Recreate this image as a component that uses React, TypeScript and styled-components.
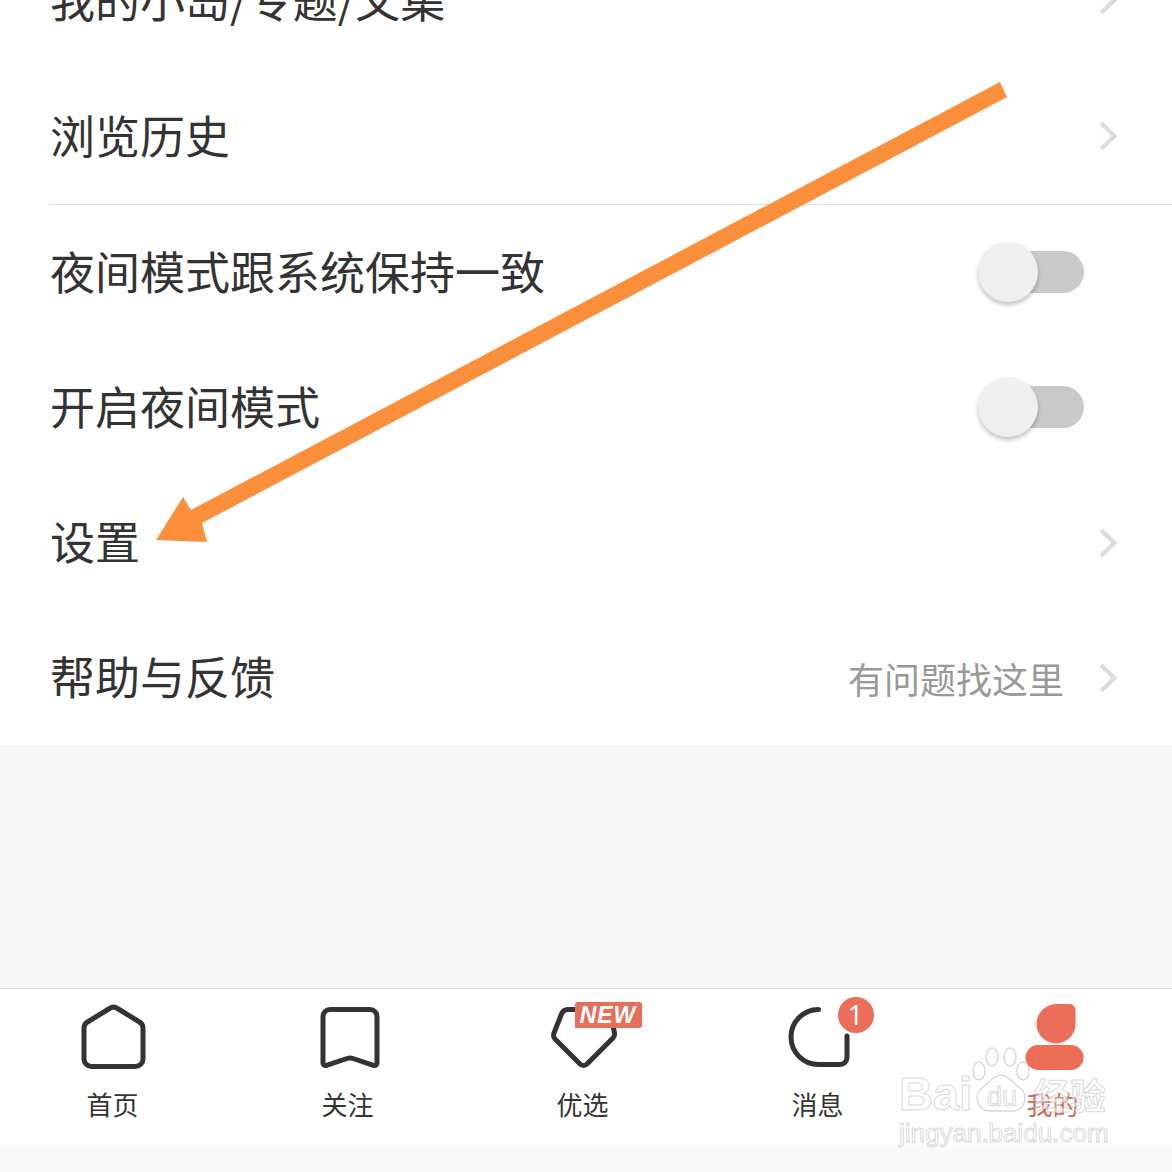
import React from 'react';
import styled, { createGlobalStyle } from 'styled-components';

const GlobalStyle = createGlobalStyle`
  html, body {
    margin: 0;
    padding: 0;
    background: #f6f6f6;
  }
  body {
    font-family: 'Noto Sans CJK SC', 'Noto Sans', sans-serif;
  }
`;

const Page = styled.div`
  position: relative;
  display: flex;
  flex-direction: column;
  width: 1172px;
  height: 1172px;
  overflow: hidden;
  background: #f6f6f6;
`;

const MenuList = styled.div`
  flex: none;
  margin-top: -68px;
  background: #fff;
`;

const Row = styled.div<{ $tall?: boolean; $divider?: boolean }>`
  display: flex;
  align-items: center;
  box-sizing: border-box;
  height: ${(p) => (p.$divider ? 137 : p.$tall ? 136 : 135)}px;
  margin-left: 50px;
  padding-right: 55px;
  border-bottom: ${(p) => (p.$divider ? '1px solid #dedede' : 'none')};
`;

const RowTitle = styled.span`
  flex: 1;
  margin-bottom: 3px;
  color: #333;
  font-size: 45px;
  line-height: 60px;
  white-space: nowrap;
`;

const RowHint = styled.span`
  margin-right: 35px;
  color: #999;
  font-size: 36px;
  line-height: 50px;
`;

const Track = styled.div`
  position: relative;
  width: 84px;
  height: 42px;
  margin: 0 33px 2px 0;
  border-radius: 0 21px 21px 0;
  background: #c9c9c9;
`;

const Thumb = styled.div`
  position: absolute;
  top: -9px;
  left: -22px;
  width: 60px;
  height: 60px;
  border-radius: 50%;
  background: #efefef;
  box-shadow: 0 3px 4px rgba(0, 0, 0, 0.24);
`;

const Filler = styled.div`
  flex: 1;
`;

const TabBar = styled.nav`
  flex: none;
  display: grid;
  grid-template-columns: repeat(5, 235px);
  box-sizing: border-box;
  height: 184px;
  margin-left: -5px;
  border-top: 1px solid #dcdcdc;
  background: linear-gradient(#fff 0, #fff 153px, #fafafa 158px);
`;

const Tab = styled.div`
  display: flex;
  flex-direction: column;
  align-items: center;
  padding-top: 13px;
`;

const IconBox = styled.div`
  position: relative;
  width: 72px;
  height: 72px;
`;

const TabIcon = styled.svg`
  display: block;
  width: 72px;
  height: 72px;
  fill: none;
  stroke: #333;
  stroke-width: 5;
  stroke-linejoin: round;
  stroke-linecap: round;
`;

const TabLabel = styled.span<{ $active?: boolean }>`
  margin-top: 12px;
  color: ${(p) => (p.$active ? '#c8695a' : '#333')};
  font-size: 26px;
  line-height: 36px;
`;

const NewTag = styled.div`
  position: absolute;
  top: 0;
  left: 28px;
  width: 67px;
  height: 26px;
  border-radius: 3px 3px 3px 0;
  background: #e4705c;
  color: #fff;
  font-family: 'Liberation Sans', sans-serif;
  font-size: 23px;
  font-style: italic;
  font-weight: 700;
  letter-spacing: 1px;
  line-height: 26px;
  text-align: center;
`;

const CountBadge = styled.div`
  position: absolute;
  top: -5px;
  left: 56px;
  width: 36px;
  height: 36px;
  border-radius: 50%;
  background: #ec6d58;
  color: #fff;
  font-family: 'Noto Sans', sans-serif;
  font-size: 27px;
  line-height: 36px;
  text-align: center;
`;

const ArrowOverlay = styled.svg`
  position: absolute;
  top: 0;
  left: 0;
  width: 1172px;
  height: 1172px;
  pointer-events: none;
`;

const Watermark = styled.div`
  position: absolute;
  top: 1046px;
  left: 898px;
  width: 214px;
  height: 104px;
  color: rgba(255, 255, 255, 0.55);
  -webkit-text-stroke: 1px rgba(200, 200, 200, 0.7);
  pointer-events: none;
`;

const MarkBrand = styled.div`
  position: absolute;
  top: 22px;
  left: 1px;
  font-family: 'Liberation Sans', sans-serif;
  font-size: 47px;
  font-weight: 700;
  line-height: 52px;
`;

const MarkDu = styled.div`
  position: absolute;
  top: 37px;
  left: 89px;
  font-family: 'Liberation Sans', sans-serif;
  font-size: 27px;
  line-height: 28px;
`;

const MarkCn = styled.div`
  position: absolute;
  top: 24px;
  left: 136px;
  font-size: 36px;
  font-weight: 700;
  line-height: 48px;
  white-space: nowrap;
`;

const MarkUrl = styled.div`
  position: absolute;
  top: 71px;
  left: 1px;
  font-family: 'Liberation Sans', sans-serif;
  font-size: 26px;
  line-height: 32px;
  white-space: nowrap;
`;

const MarkPaw = styled.svg`
  position: absolute;
  top: 1px;
  left: 72px;
  width: 62px;
  height: 66px;
  fill: rgba(255, 255, 255, 0.4);
  stroke: rgba(200, 200, 200, 0.7);
  stroke-width: 1.5;
`;

const Chevron = () => (
  <svg width="18" height="28" viewBox="0 0 18 28" fill="none" stroke="#dcdcdc" strokeWidth="4.500" strokeLinecap="round" strokeLinejoin="round">
    <path d="M3.500 2.500 15.500 14 3.500 25.500" />
  </svg>
);

const Toggle = () => (
  <Track>
    <Thumb />
  </Track>
);

const App = () => {
  return (
    <Page>
      <GlobalStyle />
      <MenuList>
        <Row $tall>
          <RowTitle>我的小岛/专题/文集</RowTitle>
          <Chevron />
        </Row>
        <Row $divider>
          <RowTitle>浏览历史</RowTitle>
          <Chevron />
        </Row>
        <Row>
          <RowTitle>夜间模式跟系统保持一致</RowTitle>
          <Toggle />
        </Row>
        <Row>
          <RowTitle>开启夜间模式</RowTitle>
          <Toggle />
        </Row>
        <Row>
          <RowTitle>设置</RowTitle>
          <Chevron />
        </Row>
        <Row>
          <RowTitle>帮助与反馈</RowTitle>
          <RowHint>有问题找这里</RowHint>
          <Chevron />
        </Row>
      </MenuList>
      <Filler />
      <TabBar>
        <Tab>
          <IconBox>
            <TabIcon viewBox="0 0 72 72">
              <path d="M32.500 6.500a7 7 0 0 1 8 0L62.500 20a7 7 0 0 1 3.500 6v31a7.500 7.500 0 0 1-7.500 7.500h-44A7.500 7.500 0 0 1 7 57V26a7 7 0 0 1 3.500-6z" />
            </TabIcon>
          </IconBox>
          <TabLabel>首页</TabLabel>
        </Tab>
        <Tab>
          <IconBox>
            <TabIcon viewBox="0 0 72 72">
              <path d="M18 7.500h40a7 7 0 0 1 7 7V61c0 2-1.500 3-3.500 2.300L41 56.500a8 8 0 0 0-6 0l-20.500 6.800C12.500 64 11 63 11 61V14.500a7 7 0 0 1 7-7z" />
            </TabIcon>
          </IconBox>
          <TabLabel>关注</TabLabel>
        </Tab>
        <Tab>
          <IconBox>
            <TabIcon viewBox="0 0 72 72">
              <path d="M32 7.500H21a7 7 0 0 0-6.500 4.500L7 31a6 6 0 0 0 1 6L33 62a5 5 0 0 0 7 0l26-26a6 6 0 0 0 1.500-5l-1-5" />
            </TabIcon>
            <NewTag>NEW</NewTag>
          </IconBox>
          <TabLabel>优选</TabLabel>
        </Tab>
        <Tab>
          <IconBox>
            <TabIcon viewBox="0 0 72 72">
              <path d="M36.500 7.500a27.500 27.500 0 0 0 0 55H58a7 7 0 0 0 7-7V34" />
            </TabIcon>
            <CountBadge>1</CountBadge>
          </IconBox>
          <TabLabel>消息</TabLabel>
        </Tab>
        <Tab>
          <IconBox>
            <TabIcon viewBox="0 0 72 72">
              <path fill="#ec6d58" stroke="none" d="M39 2h13.500a6 6 0 0 1 6 6v14a19.500 19.500 0 1 1-39 0A20 20 0 0 1 39 2z" />
              <rect fill="#ec6d58" stroke="none" x="8.500" y="43" width="58" height="25" rx="12.500" />
            </TabIcon>
          </IconBox>
          <TabLabel $active>我的</TabLabel>
        </Tab>
      </TabBar>
      <ArrowOverlay viewBox="0 0 1172 1172">
        <path fill="#fb8f3c" d="M1000 82 1007 97 202 523 207 542 156 540 183 497 191 510z" />
      </ArrowOverlay>
      <Watermark>
        <MarkPaw viewBox="0 0 62 66">
          <ellipse cx="9" cy="24" rx="6" ry="9" />
          <ellipse cx="22" cy="10" rx="6" ry="9" />
          <ellipse cx="40" cy="10" rx="6" ry="9" />
          <ellipse cx="53" cy="24" rx="6" ry="9" />
          <path d="M31 28c7 0 12 8 19 13 9 7 5 23-8 23H20C7 64 3 48 12 41c7-5 12-13 19-13z" />
        </MarkPaw>
        <MarkBrand>Bai</MarkBrand>
        <MarkDu>du</MarkDu>
        <MarkCn>经验</MarkCn>
        <MarkUrl>jingyan.baidu.com</MarkUrl>
      </Watermark>
    </Page>
  );
};

export default App;
